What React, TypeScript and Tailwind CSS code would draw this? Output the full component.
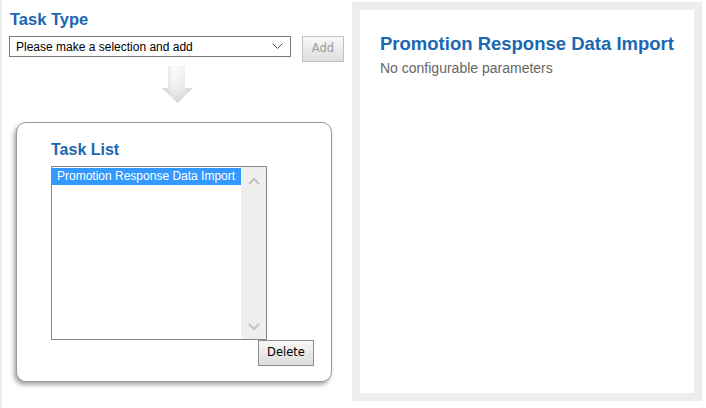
import React from "react";

function Chevron({ dir, className }: { dir: "up" | "down"; className?: string }) {
  return (
    <svg width="12" height="8" viewBox="0 0 12 8" className={className}>
      <path
        d={dir === "up" ? "M1 7 L6 2 L11 7" : "M1 1 L6 6 L11 1"}
        fill="none"
        stroke="#c4c4c4"
        strokeWidth="2"
      />
    </svg>
  );
}

function DownArrow() {
  return (
    <svg width="31" height="37" viewBox="0 0 31 37">
      <defs>
        <linearGradient id="ah" x1="0" y1="0" x2="1" y2="0">
          <stop offset="0" stopColor="#cfcfcf" />
          <stop offset="0.35" stopColor="#fbfbfb" />
          <stop offset="0.7" stopColor="#f2f2f2" />
          <stop offset="1" stopColor="#d6d6d6" />
        </linearGradient>
        <linearGradient id="av" x1="0" y1="0" x2="0" y2="1">
          <stop offset="0" stopColor="#ffffff" stopOpacity="0" />
          <stop offset="1" stopColor="#bdbdbd" stopOpacity="0.6" />
        </linearGradient>
      </defs>
      <path d="M6 0 H23 V22 H31 L15.5 37 L0 22 H6 Z" fill="url(#ah)" />
      <path d="M6 0 H23 V22 H31 L15.5 37 L0 22 H6 Z" fill="url(#av)" />
    </svg>
  );
}

export default function App() {
  return (
    <div className="flex w-[706px] h-[408px] bg-white font-['Liberation_Sans',Arial,sans-serif] overflow-hidden">
      <div className="w-[2px] h-full bg-[#ededed]" />
      <div className="w-[350px] flex flex-col">
        <h2 className="ml-[8px] mt-[10px] text-[16.5px] leading-[18px] font-bold text-[#1a67b2]">
          Task Type
        </h2>
        <div className="mt-[8px] flex items-start">
          <div className="ml-[7px] w-[282px] h-[21px] border border-[#7a7a7a] bg-white flex items-center justify-between pl-[6px] pr-[7px]">
            <span className="text-[12px] leading-[14px] text-black">Please make a selection and add</span>
            <svg width="11" height="7" viewBox="0 0 11 7">
              <path d="M0.5 0.5 L5.5 5.5 L10.5 0.5" fill="none" stroke="#555" strokeWidth="1" />
            </svg>
          </div>
          <button className="ml-[11px] w-[42px] h-[26px] border border-[#c3c3c3] bg-gradient-to-b from-[#f8f8f8] to-[#dedede] text-[11.5px] font-['DejaVu_Sans',sans-serif] text-[#9c9c9c] flex items-center justify-center">
            Add
          </button>
        </div>
        <div className="mt-[4px] ml-[160px]">
          <DownArrow />
        </div>
        <div className="mt-[19px] ml-[14px] w-[316px] h-[260px] border border-[#9a9a9a] rounded-[10px] bg-white shadow-[-2px_3px_4px_rgba(0,0,0,0.35)] flex flex-col pl-[34px] pr-[17px] pt-[18px]">
          <h2 className="text-[16px] leading-[18px] font-bold text-[#1a67b2]">Task List</h2>
          <div className="mt-[7px] w-[216px] h-[174px] border border-[#86888d] flex">
            <div className="flex-1 pt-[1px]">
              <div className="h-[17px] bg-[#3399ff] text-white text-[12px] leading-[17px] pl-[5px]">
                Promotion Response Data Import
              </div>
            </div>
            <div className="w-[25px] bg-[#efefef] flex flex-col items-center justify-between pt-[10px] pb-[8px]">
              <Chevron dir="up" />
              <Chevron dir="down" />
            </div>
          </div>
          <div className="flex justify-end">
            <button className="w-[56px] h-[26px] border border-[#8c8c8c] bg-gradient-to-b from-[#f7f7f7] to-[#dcdcdc] text-[11.5px] font-['DejaVu_Sans',sans-serif] text-black flex items-center justify-center">
              Delete
            </button>
          </div>
        </div>
      </div>
      <div className="mt-[2px] w-[350px] h-[399px] bg-[#ededed] p-[8px]">
        <div className="w-full h-full bg-white pl-[20px] pt-[23px]">
          <h1 className="text-[18.5px] leading-[22px] font-bold text-[#1a67b2]">
            Promotion Response Data Import
          </h1>
          <p className="mt-[5px] text-[14px] leading-[16px] text-[#666]">No configurable parameters</p>
        </div>
      </div>
    </div>
  );
}
